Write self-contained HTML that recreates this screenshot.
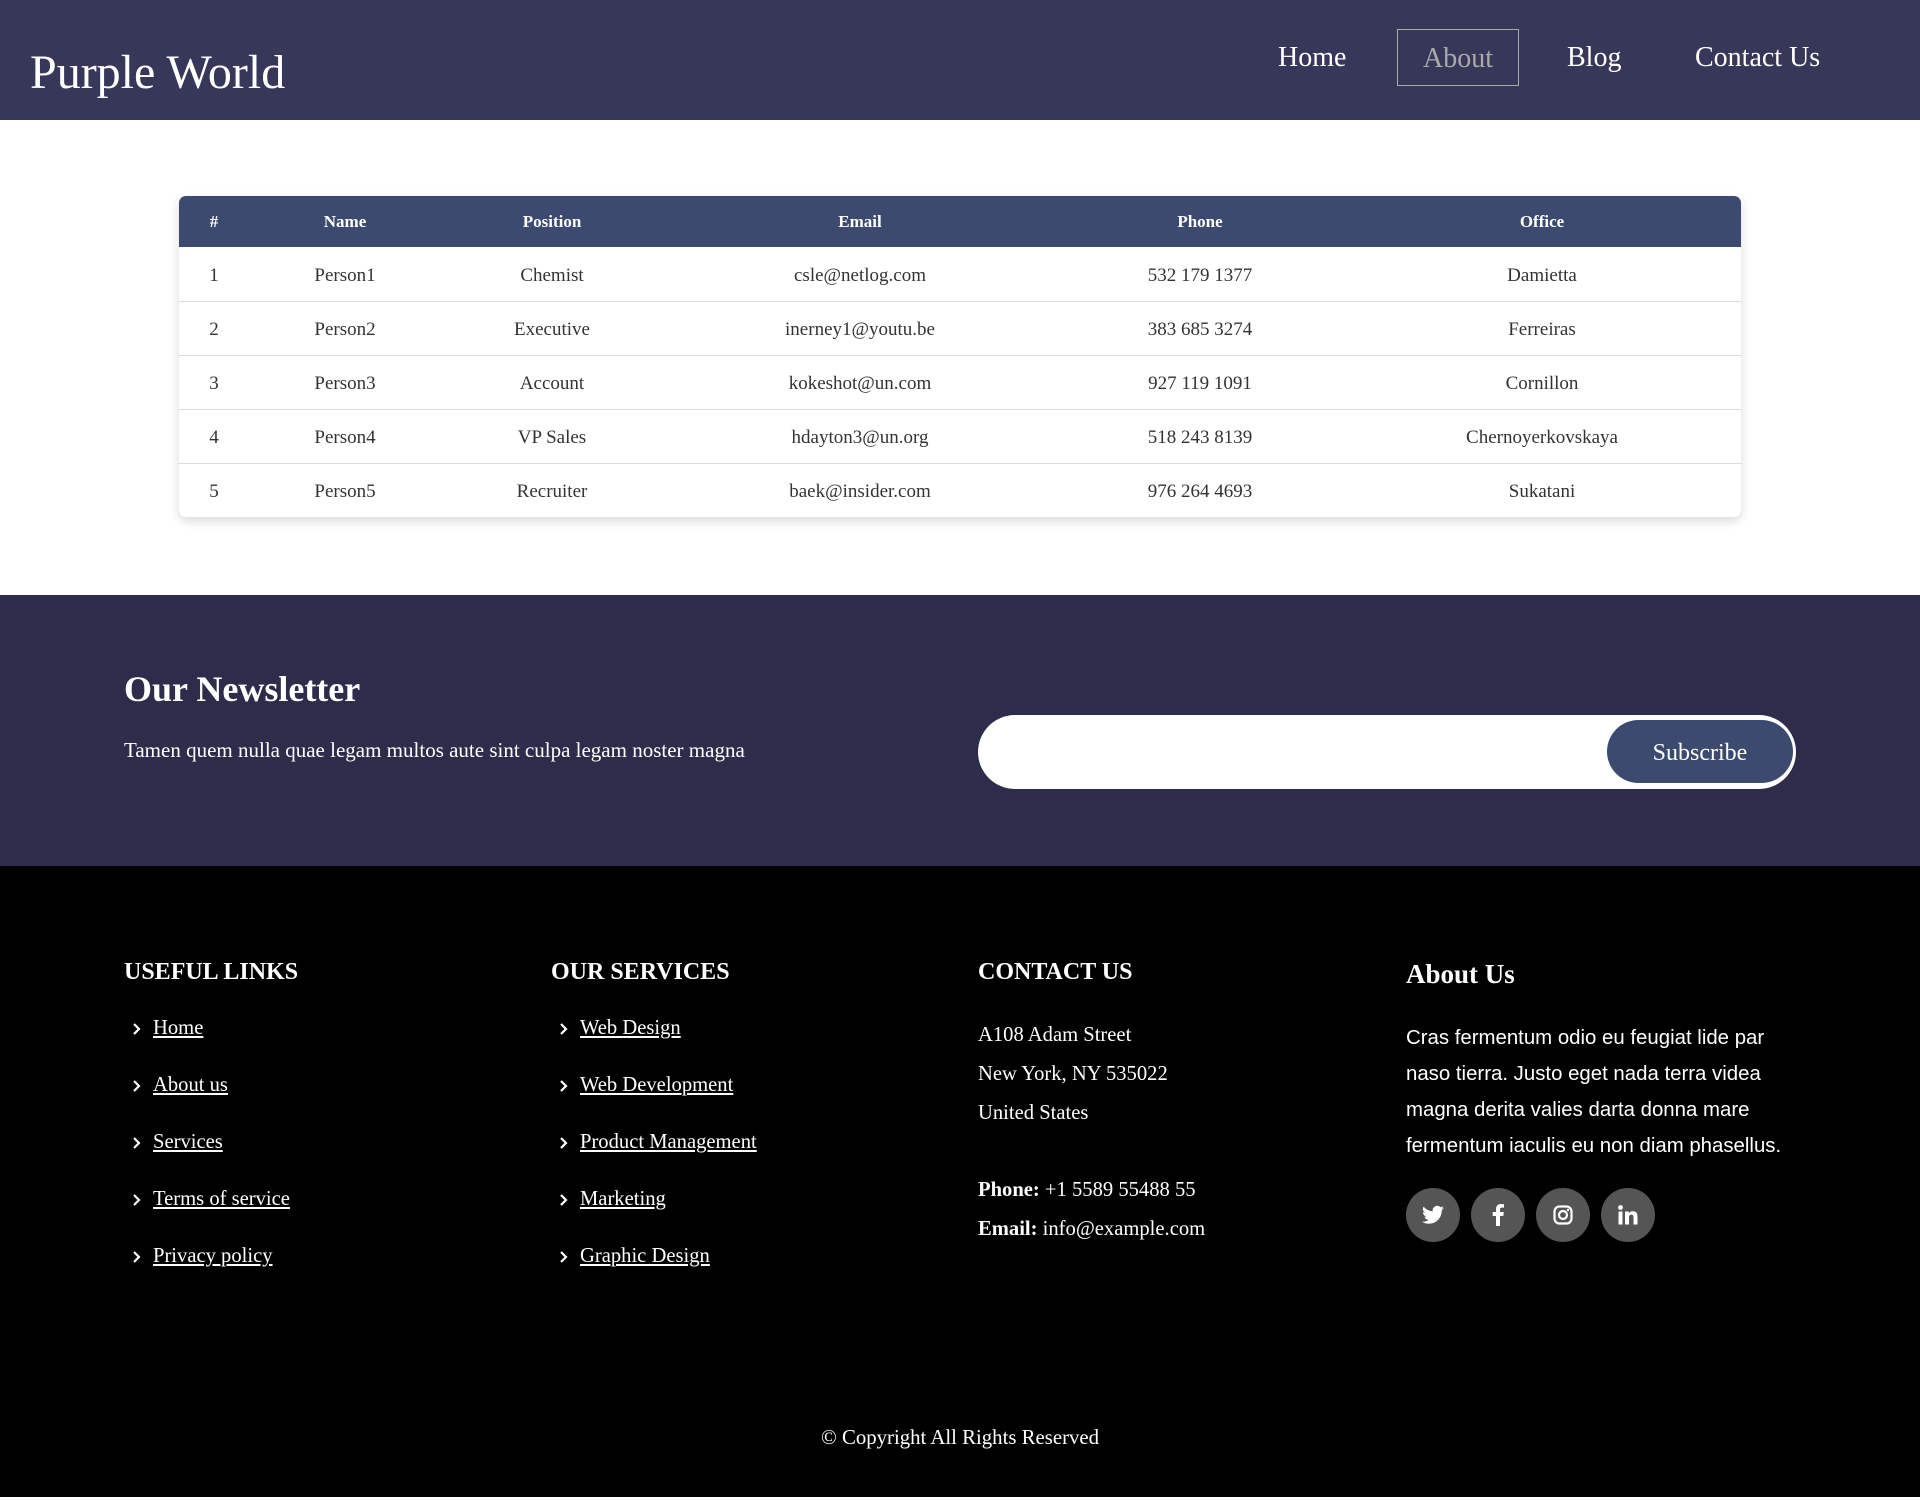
<!DOCTYPE html>
<html><head><meta charset="utf-8"><style>
*{margin:0;padding:0;box-sizing:border-box}
body{width:1920px;height:1500px;font-family:"Liberation Serif",serif;background:#000;position:relative;overflow:hidden}
.hdr{position:absolute;left:0;top:0;width:1920px;height:120px;background:#373759;color:#fff}
.logo{position:absolute;left:30px;top:43px;font-size:48px;line-height:60px}
.nav a{position:absolute;top:29px;height:57px;line-height:57px;font-size:28px;color:#fff;text-decoration:none}
.about{border:1px solid #aaa;color:#aaa!important;width:122px;text-align:center}
.main{position:absolute;left:0;top:120px;width:1920px;height:475px;background:#fff}
table{position:absolute;left:179px;top:196px;width:1562px;border-collapse:collapse;table-layout:fixed;border-radius:7px;overflow:hidden;box-shadow:0 4px 10px rgba(0,0,0,.15);background:#fff}
th{background:#3b4a6e;color:#fff;height:51px;font-size:17px;font-weight:bold;text-align:center}
td{height:54px;font-size:19px;color:#333;text-align:center;border-top:1px solid #ddd;padding-top:4px}
.news{position:absolute;left:0;top:595px;width:1920px;height:271px;background:#2d2d4b;color:#fff}
.news h2{position:absolute;left:124px;top:71px;font-size:36px;line-height:46px}
.news p{position:absolute;left:124px;font-size:21px}
.inp{position:absolute;left:978px;top:120px;width:818px;height:74px;background:#fff;border-radius:37px}
.btn{position:absolute;right:3px;top:5px;width:186px;height:63px;border-radius:32px;background:#3b4a6e;color:#fff;font-size:24px;text-align:center;line-height:66px}
.col{position:absolute;top:954px;color:#fff}
.col h4{font-size:24px;line-height:36px;font-weight:bold}
.col ul{list-style:none}
.col li{position:absolute;left:8px;font-size:20.6px;white-space:nowrap}
.col li a{color:#fff;text-decoration:underline;margin-left:21px}
.col li svg{position:absolute;left:0;top:5px}
.cline{position:absolute;font-size:20.6px;white-space:nowrap}
.abt{position:absolute;left:1406px;top:1020px;width:385px;font-family:"Liberation Sans",sans-serif;font-size:20.4px;line-height:36px;color:#fff}
.soc{position:absolute;top:1188px;width:54px;height:54px;border-radius:50%;background:#555;display:flex;align-items:center;justify-content:center}
.copy{position:absolute;left:0;width:1920px;top:1426px;text-align:center;color:#fff;font-size:20.8px}
.btm{position:absolute;left:0;top:1497px;width:1920px;height:3px;background:#fff}
</style></head><body>
<div class="hdr"><div class="logo">Purple World</div>
<div class="nav"><a style="left:1278px">Home</a><a class="about" style="left:1397px">About</a><a style="left:1567px">Blog</a><a style="left:1695px">Contact Us</a></div></div>
<div class="main"></div>
<table>
<colgroup><col style="width:70px"><col style="width:192px"><col style="width:222px"><col style="width:394px"><col style="width:286px"><col style="width:398px"></colgroup>
<tr><th>#</th><th>Name</th><th>Position</th><th>Email</th><th>Phone</th><th>Office</th></tr>
<tr><td style="border-top:0">1</td><td style="border-top:0">Person1</td><td style="border-top:0">Chemist</td><td style="border-top:0">csle@netlog.com</td><td style="border-top:0">532 179 1377</td><td style="border-top:0">Damietta</td></tr>
<tr><td>2</td><td>Person2</td><td>Executive</td><td>inerney1@youtu.be</td><td>383 685 3274</td><td>Ferreiras</td></tr>
<tr><td>3</td><td>Person3</td><td>Account</td><td>kokeshot@un.com</td><td>927 119 1091</td><td>Cornillon</td></tr>
<tr><td>4</td><td>Person4</td><td>VP Sales</td><td>hdayton3@un.org</td><td>518 243 8139</td><td>Chernoyerkovskaya</td></tr>
<tr><td>5</td><td>Person5</td><td>Recruiter</td><td>baek@insider.com</td><td>976 264 4693</td><td>Sukatani</td></tr>
</table>
<div class="news"><h2>Our Newsletter</h2><p style="top:143px">Tamen quem nulla quae legam multos aute sint culpa legam noster magna</p>
<div class="inp"><div class="btn">Subscribe</div></div></div>

<div class="col" style="left:124px"><h4>USEFUL LINKS</h4>
<ul>
<li style="top:63px"><svg width="10" height="14" viewBox="0 0 10 14"><path d="M2 2l5 5-5 5" stroke="#fff" stroke-width="2.2" fill="none"/></svg><a>Home</a></li>
<li style="top:120px"><svg width="10" height="14" viewBox="0 0 10 14"><path d="M2 2l5 5-5 5" stroke="#fff" stroke-width="2.2" fill="none"/></svg><a>About us</a></li>
<li style="top:177px"><svg width="10" height="14" viewBox="0 0 10 14"><path d="M2 2l5 5-5 5" stroke="#fff" stroke-width="2.2" fill="none"/></svg><a>Services</a></li>
<li style="top:234px"><svg width="10" height="14" viewBox="0 0 10 14"><path d="M2 2l5 5-5 5" stroke="#fff" stroke-width="2.2" fill="none"/></svg><a>Terms of service</a></li>
<li style="top:291px"><svg width="10" height="14" viewBox="0 0 10 14"><path d="M2 2l5 5-5 5" stroke="#fff" stroke-width="2.2" fill="none"/></svg><a>Privacy policy</a></li>
</ul></div>
<div class="col" style="left:551px"><h4>OUR SERVICES</h4>
<ul>
<li style="top:63px"><svg width="10" height="14" viewBox="0 0 10 14"><path d="M2 2l5 5-5 5" stroke="#fff" stroke-width="2.2" fill="none"/></svg><a>Web Design</a></li>
<li style="top:120px"><svg width="10" height="14" viewBox="0 0 10 14"><path d="M2 2l5 5-5 5" stroke="#fff" stroke-width="2.2" fill="none"/></svg><a>Web Development</a></li>
<li style="top:177px"><svg width="10" height="14" viewBox="0 0 10 14"><path d="M2 2l5 5-5 5" stroke="#fff" stroke-width="2.2" fill="none"/></svg><a>Product Management</a></li>
<li style="top:234px"><svg width="10" height="14" viewBox="0 0 10 14"><path d="M2 2l5 5-5 5" stroke="#fff" stroke-width="2.2" fill="none"/></svg><a>Marketing</a></li>
<li style="top:291px"><svg width="10" height="14" viewBox="0 0 10 14"><path d="M2 2l5 5-5 5" stroke="#fff" stroke-width="2.2" fill="none"/></svg><a>Graphic Design</a></li>
</ul></div>
<div class="col" style="left:978px"><h4>CONTACT US</h4>
<div class="cline" style="top:70px">A108 Adam Street</div>
<div class="cline" style="top:109px">New York, NY 535022</div>
<div class="cline" style="top:148px">United States</div>
<div class="cline" style="top:225px"><b>Phone:</b> +1 5589 55488 55</div>
<div class="cline" style="top:264px"><b>Email:</b> info@example.com</div>
</div>
<div class="col" style="left:1406px;top:956px"><h4 style="font-size:27px">About Us</h4></div>
<div class="abt">Cras fermentum odio eu feugiat lide par naso tierra. Justo eget nada terra videa magna derita valies darta donna mare fermentum iaculis eu non diam phasellus.</div>
<div class="soc" style="left:1406px"><svg width="22" height="20" viewBox="0 0 24 20"><path fill="#fff" d="M24 2.4a9.8 9.8 0 0 1-2.8.8A4.9 4.9 0 0 0 23.3.4a9.9 9.9 0 0 1-3.1 1.2A4.9 4.9 0 0 0 11.8 6 14 14 0 0 1 1.7.9a4.9 4.9 0 0 0 1.5 6.6 4.9 4.9 0 0 1-2.2-.6 4.9 4.9 0 0 0 3.9 4.9 4.9 4.9 0 0 1-2.2.1 4.9 4.9 0 0 0 4.6 3.4A9.9 9.9 0 0 1 0 17.3 14 14 0 0 0 7.5 19.5c9.1 0 14-7.5 14-14v-.6A10 10 0 0 0 24 2.4z"/></svg></div>
<div class="soc" style="left:1471px"><svg width="12" height="22" viewBox="0 0 12 22"><path fill="#fff" d="M8 22V12h3.3l.5-4H8V5.5c0-1.1.3-1.9 1.9-1.9H12V.2A27 27 0 0 0 9 0C6 0 4 1.8 4 5.2V8H.7v4H4v10z"/></svg></div>
<div class="soc" style="left:1536px"><svg width="20" height="20" viewBox="0 0 20 20"><rect x="1.5" y="1.5" width="17" height="17" rx="5" fill="none" stroke="#fff" stroke-width="2.2"/><circle cx="10" cy="10" r="4" fill="none" stroke="#fff" stroke-width="2.2"/><circle cx="15" cy="5" r="1.2" fill="#fff"/></svg></div>
<div class="soc" style="left:1601px"><svg width="20" height="20" viewBox="0 0 20 20"><rect x="0.5" y="6.5" width="4" height="13" fill="#fff"/><circle cx="2.5" cy="2.5" r="2.4" fill="#fff"/><path fill="#fff" d="M7 6.5h3.8v1.8c.6-1 1.9-2.1 4-2.1 4 0 4.7 2.6 4.7 6v7.3h-4v-6.4c0-1.5 0-3.5-2.1-3.5s-2.4 1.6-2.4 3.4v6.5H7z"/></svg></div>
<div class="copy">© Copyright All Rights Reserved</div>
<div class="btm"></div>
</body></html>
